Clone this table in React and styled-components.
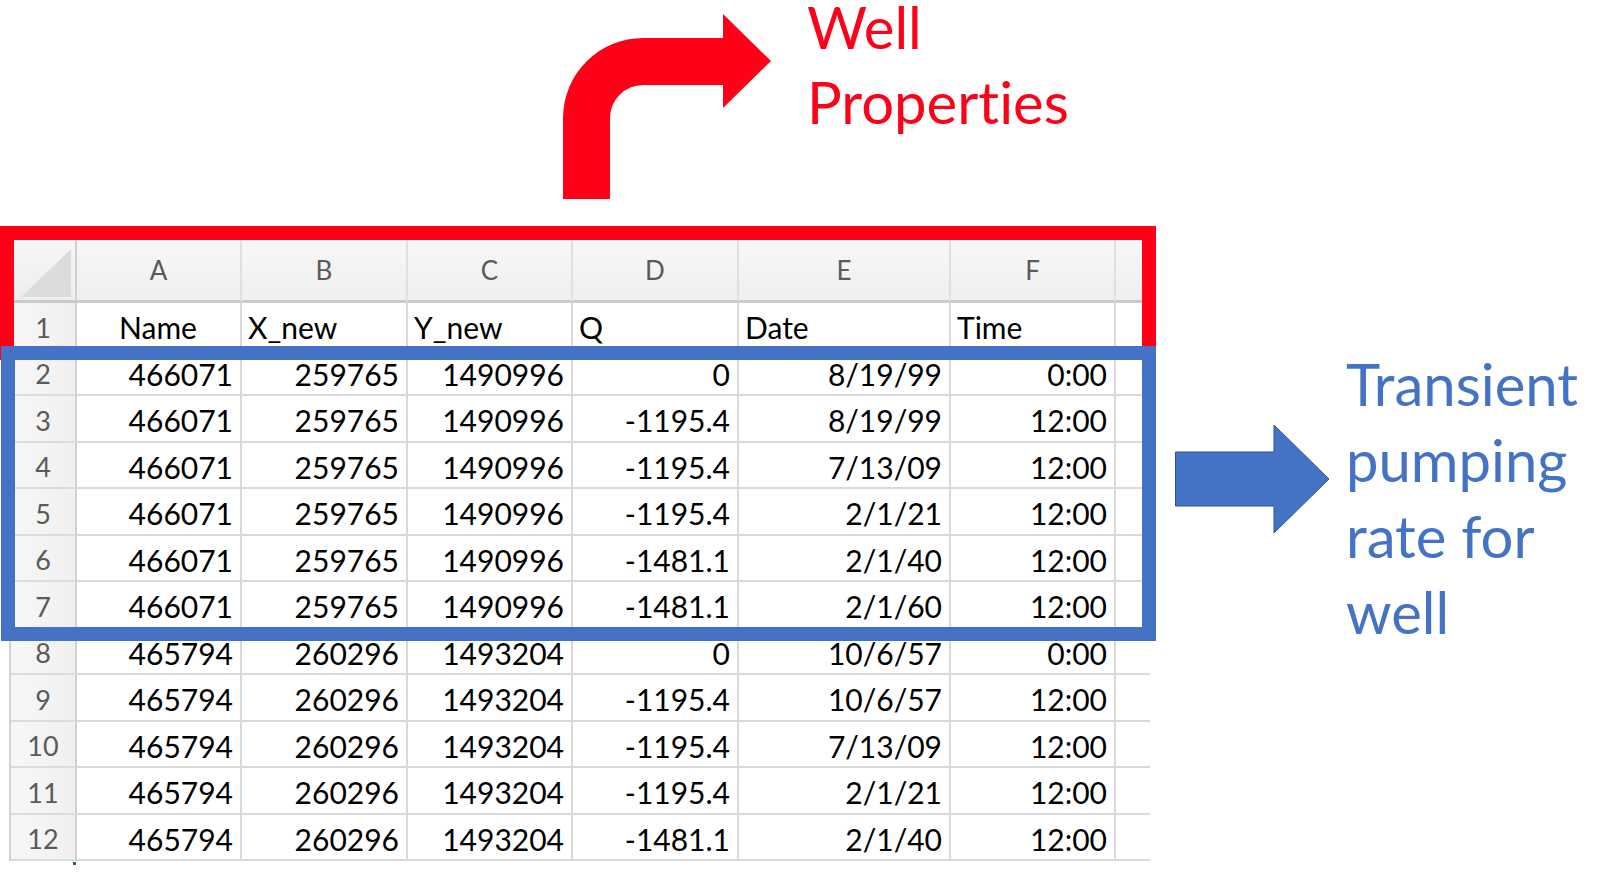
import React from "react";
import styled, { createGlobalStyle } from "styled-components";

const GlobalStyle = createGlobalStyle`
  html, body {
    margin: 0;
    padding: 0;
    background: #fff;
  }
  body {
    font-family: "Lato", "Liberation Sans", sans-serif;
    font-variant-ligatures: none;
  }
`;

const Slide = styled.div`
  display: flex;
  width: 1602px;
  height: 874px;
  overflow: hidden;
  background: #fff;
`;

const LeftSide = styled.div`
  display: flex;
  flex-direction: column;
  width: 1156px;
  flex-shrink: 0;
`;

const Callout = styled.div`
  display: flex;
  align-items: flex-start;
  gap: 36px;
  height: 240px;
  padding-left: 563px;
  box-sizing: border-box;
`;

const RightSide = styled.div`
  display: flex;
  align-items: flex-start;
  gap: 15px;
  padding-left: 19px;
`;

const Label = styled.div`
  display: flex;
  flex-direction: column;
  gap: ${(p) => p.$gap}px;
  margin-top: ${(p) => p.$top}px;
  font-family: "Lato", "Liberation Sans", sans-serif;
  font-size: 58px;
  line-height: 54px;
  color: ${(p) => p.$color};
  white-space: nowrap;
  font-variant-ligatures: none;
`;

const ArrowSvg = styled.svg`
  display: block;
  flex-shrink: 0;
  margin-top: ${(p) => p.$top || 0}px;
`;

const SheetArea = styled.div`
  position: relative;
  padding-left: 9px;
`;

const Sheet = styled.div`
  display: grid;
  grid-template-columns: 66px 165px 166px 165px 166px 212px 165px 34px;
  grid-template-rows: 63px repeat(12, 46.5px);
  width: 1141px;
  border-left: 2px solid #d2d2d2;
`;

const BaseCell = styled.div`
  box-sizing: border-box;
  display: flex;
  align-items: center;
  overflow: hidden;
  white-space: nowrap;
`;

const Corner = styled(BaseCell)`
  position: relative;
  background: linear-gradient(#f6f6f6, #eeeeee);
  border-right: 2px solid #d0d0d0;
  border-bottom: 3px solid #cacaca;

  &::after {
    content: "";
    position: absolute;
    left: 10px;
    top: 9px;
    width: 50px;
    height: 48px;
    background: #dcdcdc;
    clip-path: polygon(100% 0, 100% 100%, 0 100%);
  }
`;

const ColHead = styled(BaseCell)`
  justify-content: center;
  background: linear-gradient(#f7f7f7, #efefef);
  border-right: ${(p) => (p.$last ? "none" : "2px solid #e0e0e0")};
  border-bottom: 3px solid #cacaca;
  font-size: 26px;
  color: #5a5a5a;
`;

const RowHead = styled(BaseCell)`
  justify-content: center;
  padding-top: 4px;
  background: linear-gradient(90deg, #f7f7f7, #f0f0f0);
  border-right: 2px solid #d0d0d0;
  border-bottom: 2px solid #dcdcdc;
  font-size: 27px;
  color: #5a5a5a;
`;

const Cell = styled(BaseCell)`
  justify-content: ${(p) =>
    p.$align === "left" ? "flex-start" : p.$align === "center" ? "center" : "flex-end"};
  padding: 4px 7px 0 6px;
  background: #fff;
  border-right: ${(p) => (p.$last ? "none" : "2px solid #d9d9d9")};
  border-bottom: 2px solid #d9d9d9;
  font-size: 30px;
  color: #000;
`;

const Highlight = styled.div`
  position: absolute;
  box-sizing: border-box;
  left: ${(p) => p.$left}px;
  top: ${(p) => p.$top}px;
  width: ${(p) => p.$width}px;
  height: ${(p) => p.$height}px;
  border: 14px solid ${(p) => p.$color};
  pointer-events: none;
`;

const ActiveMark = styled.div`
  position: absolute;
  left: 73px;
  top: 622px;
  width: 3px;
  height: 3px;
  background: #1e7145;
`;

const RED = "#ff0019";
const BLUE = "#4472c4";

const letters = ["A", "B", "C", "D", "E", "F", ""];

const titles = [
  { text: "Name", align: "center" },
  { text: "X_new", align: "left" },
  { text: "Y_new", align: "left" },
  { text: "Q", align: "left" },
  { text: "Date", align: "left" },
  { text: "Time", align: "left" },
];

const rows = [
  ["466071", "259765", "1490996", "0", "8/19/99", "0:00"],
  ["466071", "259765", "1490996", "-1195.4", "8/19/99", "12:00"],
  ["466071", "259765", "1490996", "-1195.4", "7/13/09", "12:00"],
  ["466071", "259765", "1490996", "-1195.4", "2/1/21", "12:00"],
  ["466071", "259765", "1490996", "-1481.1", "2/1/40", "12:00"],
  ["466071", "259765", "1490996", "-1481.1", "2/1/60", "12:00"],
  ["465794", "260296", "1493204", "0", "10/6/57", "0:00"],
  ["465794", "260296", "1493204", "-1195.4", "10/6/57", "12:00"],
  ["465794", "260296", "1493204", "-1195.4", "7/13/09", "12:00"],
  ["465794", "260296", "1493204", "-1195.4", "2/1/21", "12:00"],
  ["465794", "260296", "1493204", "-1481.1", "2/1/40", "12:00"],
];

function BentArrow() {
  return (
    <ArrowSvg width="208" height="199" viewBox="0 0 208 199">
      <path
        d="M0 199 L0 118 A80 80 0 0 1 80 38 L160 38 L160 14 L208 61 L160 108 L160 85 L80 85 A33 33 0 0 0 47 118 L47 199 Z"
        fill={RED}
      />
    </ArrowSvg>
  );
}

function BlockArrow() {
  return (
    <ArrowSvg $top={424} width="156" height="111" viewBox="0 0 156 111">
      <path
        d="M0.5 28 L99 28 L99 1 L154 55 L99 109 L99 82 L0.5 82 Z"
        fill={BLUE}
        stroke="#2f528f"
        strokeWidth="1"
      />
    </ArrowSvg>
  );
}

function Spreadsheet() {
  return (
    <Sheet>
      <Corner />
      {letters.map((l, i) => (
        <ColHead key={"h" + i} $last={i === letters.length - 1}>
          {l}
        </ColHead>
      ))}

      <RowHead>1</RowHead>
      {titles.map((t, i) => (
        <Cell key={"t" + i} $align={t.align}>
          {t.text}
        </Cell>
      ))}
      <Cell $last />

      {rows.map((r, ri) => (
        <React.Fragment key={"r" + ri}>
          <RowHead>{ri + 2}</RowHead>
          {r.map((v, ci) => (
            <Cell key={ci} $align="right">
              {v}
            </Cell>
          ))}
          <Cell $last />
        </React.Fragment>
      ))}
    </Sheet>
  );
}

export default function App() {
  return (
    <>
      <GlobalStyle />
      <Slide>
        <LeftSide>
          <Callout>
            <BentArrow />
            <Label $color={RED} $top={0} $gap={21}>
              <span>Well</span>
              <span>Properties</span>
            </Label>
          </Callout>
          <SheetArea>
            <Spreadsheet />
            <Highlight $color={RED} $left={0} $top={-14} $width={1156} $height={134} />
            <Highlight $color={BLUE} $left={1} $top={106} $width={1155} $height={295} />
            <ActiveMark />
          </SheetArea>
        </LeftSide>
        <RightSide>
          <BlockArrow />
          <Label $color={BLUE} $top={357} $gap={22}>
            <span>Transient</span>
            <span>pumping</span>
            <span>rate for</span>
            <span>well</span>
          </Label>
        </RightSide>
      </Slide>
    </>
  );
}
